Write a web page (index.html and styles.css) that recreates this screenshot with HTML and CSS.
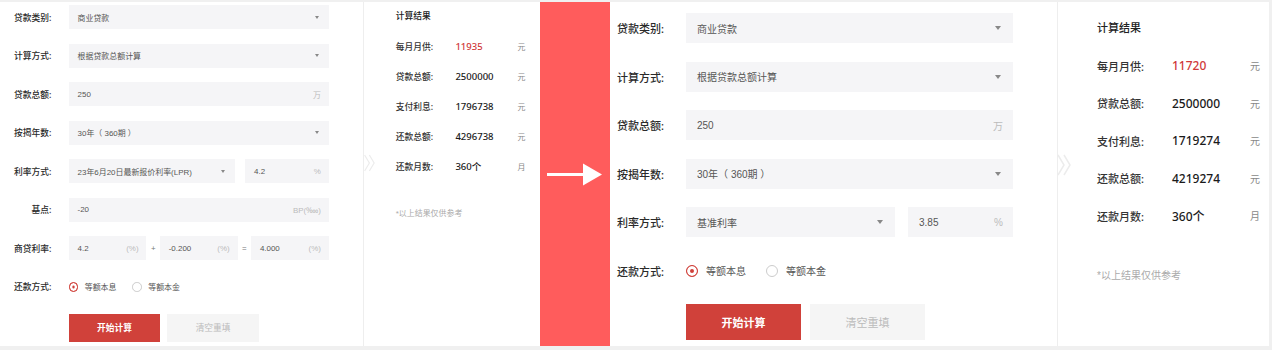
FILE: index.html
```html
<!DOCTYPE html>
<html lang="zh-CN">
<head>
    <meta charset="UTF-8">
    <meta name="viewport" content="width=device-width, initial-scale=1.0">
    <title>房贷计算器</title>
    <link rel="stylesheet" href="styles.css">
</head>
<body>

<div class="frame">
    <!-- 旧版（缩小） -->
    <div class="slot slot-mini">
        <div class="calc calc-mini">
            <div class="calc-form">
                <div class="row">
                    <span class="row-label">贷款类别:</span>
                    <div class="field"><span class="field-text">商业贷款</span><span class="caret"></span></div>
                </div>
                <div class="row">
                    <span class="row-label">计算方式:</span>
                    <div class="field"><span class="field-text">根据贷款总额计算</span><span class="caret"></span></div>
                </div>
                <div class="row">
                    <span class="row-label">贷款总额:</span>
                    <div class="field"><span class="field-text">250</span><span class="field-unit">万</span></div>
                </div>
                <div class="row">
                    <span class="row-label">按揭年数:</span>
                    <div class="field"><span class="field-text">30年（ 360期 ）</span><span class="caret"></span></div>
                </div>
                <div class="row">
                    <span class="row-label">利率方式:</span>
                    <div class="field field-wide"><span class="field-text">23年6月20日最新报价利率(LPR)</span><span class="caret"></span></div>
                    <div class="field field-side"><span class="field-text">4.2</span><span class="field-unit">%</span></div>
                </div>
                <div class="row">
                    <span class="row-label">基点:</span>
                    <div class="field"><span class="field-text">-20</span><span class="field-unit">BP(‱)</span></div>
                </div>
                <div class="row">
                    <span class="row-label">商贷利率:</span>
                    <div class="field"><span class="field-text">4.2</span><span class="field-unit">(%)</span></div>
                    <span class="op">+</span>
                    <div class="field"><span class="field-text">-0.200</span><span class="field-unit">(%)</span></div>
                    <span class="op">=</span>
                    <div class="field"><span class="field-text">4.000</span><span class="field-unit">(%)</span></div>
                </div>
                <div class="row">
                    <span class="row-label">还款方式:</span>
                    <div class="radio-group">
                        <span class="radio"><span class="radio-dot is-on"></span>等额本息</span>
                        <span class="radio"><span class="radio-dot"></span>等额本金</span>
                    </div>
                </div>
                <div class="actions">
                    <button class="btn btn-primary">开始计算</button>
                    <button class="btn btn-plain">清空重填</button>
                </div>
            </div>
            <div class="calc-result">
                <span class="result-chevron">
                    <svg width="16" height="24" viewBox="0 0 16 24"><polyline points="2,2 8,12 2,22" /><polyline points="8,2 14,12 8,22" /></svg>
                </span>
                <h3 class="result-title">计算结果</h3>
                <dl class="result-list">
                    <div class="result-row"><dt>每月月供:</dt><dd class="is-red">11935</dd><span class="result-unit">元</span></div>
                    <div class="result-row"><dt>贷款总额:</dt><dd>2500000</dd><span class="result-unit">元</span></div>
                    <div class="result-row"><dt>支付利息:</dt><dd>1796738</dd><span class="result-unit">元</span></div>
                    <div class="result-row"><dt>还款总额:</dt><dd>4296738</dd><span class="result-unit">元</span></div>
                    <div class="result-row"><dt>还款月数:</dt><dd>360个</dd><span class="result-unit">月</span></div>
                </dl>
                <p class="result-note">*以上结果仅供参考</p>
            </div>
        </div>
    </div>

    <div class="band">
        <svg width="56" height="24" viewBox="0 0 56 24"><rect x="0" y="11" width="38" height="3" fill="#fff" /><polygon points="36,1.5 55,12.5 36,23.5" fill="#fff" /></svg>
    </div>

    <!-- 新版 -->
    <div class="slot slot-main">
        <div class="calc calc-main">
            <div class="calc-form">
                <div class="row">
                    <span class="row-label">贷款类别:</span>
                    <div class="field"><span class="field-text">商业贷款</span><span class="caret"></span></div>
                </div>
                <div class="row">
                    <span class="row-label">计算方式:</span>
                    <div class="field"><span class="field-text">根据贷款总额计算</span><span class="caret"></span></div>
                </div>
                <div class="row">
                    <span class="row-label">贷款总额:</span>
                    <div class="field"><span class="field-text">250</span><span class="field-unit">万</span></div>
                </div>
                <div class="row">
                    <span class="row-label">按揭年数:</span>
                    <div class="field"><span class="field-text">30年（ 360期 ）</span><span class="caret"></span></div>
                </div>
                <div class="row">
                    <span class="row-label">利率方式:</span>
                    <div class="field field-wide"><span class="field-text">基准利率</span><span class="caret"></span></div>
                    <div class="field field-side"><span class="field-text">3.85</span><span class="field-unit">%</span></div>
                </div>
                <div class="row">
                    <span class="row-label">还款方式:</span>
                    <div class="radio-group">
                        <span class="radio"><span class="radio-dot is-on"></span>等额本息</span>
                        <span class="radio"><span class="radio-dot"></span>等额本金</span>
                    </div>
                </div>
                <div class="actions">
                    <button class="btn btn-primary">开始计算</button>
                    <button class="btn btn-plain">清空重填</button>
                </div>
            </div>
            <div class="calc-result">
                <span class="result-chevron">
                    <svg width="16" height="24" viewBox="0 0 16 24"><polyline points="2,2 8,12 2,22" /><polyline points="8,2 14,12 8,22" /></svg>
                </span>
                <h3 class="result-title">计算结果</h3>
                <dl class="result-list">
                    <div class="result-row"><dt>每月月供:</dt><dd class="is-red">11720</dd><span class="result-unit">元</span></div>
                    <div class="result-row"><dt>贷款总额:</dt><dd>2500000</dd><span class="result-unit">元</span></div>
                    <div class="result-row"><dt>支付利息:</dt><dd>1719274</dd><span class="result-unit">元</span></div>
                    <div class="result-row"><dt>还款总额:</dt><dd>4219274</dd><span class="result-unit">元</span></div>
                    <div class="result-row"><dt>还款月数:</dt><dd>360个</dd><span class="result-unit">月</span></div>
                </dl>
                <p class="result-note">*以上结果仅供参考</p>
            </div>
        </div>
    </div>
</div>

</body>
</html>
```

FILE: styles.css
```css
/* 全局 */
* {
    box-sizing: border-box;
}

html, body {
    margin: 0;
    padding: 0;
}

body {
    font-family: "Liberation Sans", "Noto Sans CJK SC", sans-serif;
    background-color: #f0f0f0;
    color: #333;
}

/* 外框 */
.frame {
    display: flex;
    height: 350px;
    padding: 2px 3px 4px 0;
}

.slot {
    position: relative;
    background-color: #fff;
    overflow: hidden;
}

.slot-mini {
    flex: none;
    width: 540px;
}

.slot-main {
    flex: 1;
}

/* 中间红色箭头 */
.band {
    flex: none;
    width: 70px;
    background-color: #ff5c5c;
    display: flex;
    align-items: center;
    justify-content: center;
}

/* 计算器 */
.calc {
    display: flex;
    height: 100%;
}

.calc-mini {
    zoom: 0.795;
    height: 440px;
    margin-top: -7px;
}

.calc-form {
    flex: none;
    width: 396px;
    padding-top: 11px;
    display: flex;
    flex-direction: column;
    gap: 18.5px;
}

.calc-mini .calc-form {
    margin-left: 17.6px;
}

.calc-main .calc-form {
    margin-left: 7px;
}

.row {
    display: flex;
    align-items: center;
    height: 30px;
}

.row-label {
    flex: none;
    width: 69px;
    padding-right: 22px;
    text-align: right;
    white-space: nowrap;
    font-family: "Noto Sans", "Noto Sans CJK SC", sans-serif;
    font-size: 11px;
    font-weight: 500;
    color: #2a2a2a;
}

/* 输入框 */
.field {
    flex: 1;
    min-width: 0;
    height: 30px;
    display: flex;
    align-items: center;
    padding: 0 10px 0 11px;
    background-color: #f5f5f7;
    font-size: 10px;
    color: #555;
}

.field-text {
    flex: 1;
    white-space: nowrap;
}

.field-wide {
    flex: none;
    width: 209px;
}

.field-side {
    margin-left: 13px;
}

.field-unit {
    color: #bbb;
    font-size: 10px;
}

.caret {
    width: 0;
    height: 0;
    margin-right: 2px;
    border-left: 3px solid transparent;
    border-right: 3px solid transparent;
    border-top: 4px solid #888;
}

.op {
    flex: none;
    width: 17px;
    text-align: center;
    font-size: 10px;
    color: #777;
}

/* 单选 */
.radio-group {
    display: flex;
    align-items: center;
    gap: 20px;
    font-size: 10px;
    color: #555;
}

.radio {
    display: flex;
    align-items: center;
    gap: 8px;
}

.radio-dot {
    width: 12px;
    height: 12px;
    border-radius: 50%;
    border: 1px solid #ccc;
    background-color: #fff;
}

.radio-dot.is-on {
    border-color: #d0403a;
    background-color: #d0403a;
    box-shadow: inset 0 0 0 3px #fff;
}

/* 按钮 */
.actions {
    display: flex;
    gap: 9px;
    padding-left: 69px;
}

.btn {
    width: 115px;
    height: 36px;
    border: none;
    font-family: inherit;
    font-size: 11px;
    cursor: pointer;
}

.btn-primary {
    background-color: #d0413a;
    color: #fff;
    font-weight: bold;
}

.btn-plain {
    background-color: #f5f5f5;
    color: #bbb;
}

/* 结果 */
.calc-result {
    position: relative;
    flex: 1;
    margin-left: 43.5px;
    border-left: 1px solid #eee;
    padding: 16px 0 0 39.5px;
}

.result-chevron {
    position: absolute;
    left: -2px;
    top: 47.5%;
    transform: translateY(-50%);
    line-height: 0;
}

.result-chevron polyline {
    fill: none;
    stroke: #ececec;
    stroke-width: 1.5;
}

.result-title {
    margin: 0 0 17.5px;
    font-family: "Noto Sans", "Noto Sans CJK SC", sans-serif;
    font-size: 11px;
    font-weight: 500;
    line-height: 20px;
    color: #222;
}

.result-list {
    margin: 0;
    display: flex;
    flex-direction: column;
    gap: 17.5px;
}

.result-row {
    display: flex;
    align-items: center;
    height: 20px;
}

.result-row dt {
    flex: none;
    width: 75px;
    font-family: "Noto Sans", "Noto Sans CJK SC", sans-serif;
    font-size: 11px;
    font-weight: 500;
    color: #333;
}

.result-row dd {
    flex: none;
    width: 78px;
    margin: 0;
    font-family: "Noto Sans", "Noto Sans CJK SC", sans-serif;
    font-size: 12px;
    font-weight: 500;
    color: #1a1a1a;
}

.result-row dd.is-red {
    color: #d0393a;
}

.result-unit {
    font-size: 10px;
    color: #888;
}

.result-note {
    margin: 40px 0 0;
    font-size: 10px;
    line-height: 20px;
    color: #aaa;
}
```
